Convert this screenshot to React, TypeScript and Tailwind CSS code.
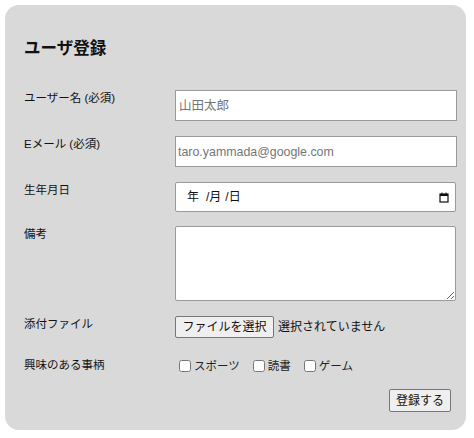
import { ReactElement } from "react"

const font = "font-['Liberation_Sans','Noto_Sans_CJK_JP',sans-serif]"

const Row = ({ label, children, className = "" }: { label: string, children: ReactElement, className?: string }) => {
    return (
        <div className={`flex ${className}`}>
            <div className="w-[151px] shrink-0 text-[11.5px] leading-[16px] text-[#111]">
                {label}
            </div>
            <div className="flex-1">
                {children}
            </div>
        </div>
    )
}

const CalendarIcon = () => (
    <svg width="10" height="11" viewBox="0 0 10 11" className="shrink-0">
        <rect x="1" y="2" width="8" height="8" fill="none" stroke="#111" strokeWidth="1.2" />
        <rect x="1" y="2" width="8" height="2" fill="#111" />
        <rect x="2.5" y="0.5" width="1" height="2" fill="#111" />
        <rect x="6.5" y="0.5" width="1" height="2" fill="#111" />
    </svg>
)

const Check = ({ label }: { label: string }) => (
    <label className="flex items-center mr-[13px]">
        <input type="checkbox" className="w-[12px] h-[12px] m-0 mr-[3px] accent-[#444]" />
        <span className="text-[11.5px] leading-[16px] text-[#222]">{label}</span>
    </label>
)

const App = () => {
    return (
        <div className={`w-[474px] h-[438px] bg-white p-[5px] ${font}`}>
            <div className="w-[461px] h-[425px] rounded-[14px] bg-[#d9d9d9] pl-[19px] pr-[9px] pt-[31px]">
                <h1 className="text-[16.5px] font-bold leading-[24px] text-[#111]">ユーザ登録</h1>

                <form className="mt-[30px] flex flex-col" onSubmit={e => e.preventDefault()}>
                    <Row label="ユーザー名 (必須)">
                        <input
                            type="text"
                            placeholder="山田太郎"
                            className="w-[282px] h-[31px] bg-white border border-[#9a9a9a] px-[3px] text-[12.5px] placeholder:text-[#767676] outline-none"
                        />
                    </Row>

                    <Row label="Eメール (必須)" className="mt-[15px]">
                        <input
                            type="email"
                            placeholder="taro.yammada@google.com"
                            className="w-[282px] h-[31px] bg-white border border-[#9a9a9a] px-[2px] text-[12.4px] placeholder:text-[#767676] outline-none"
                        />
                    </Row>

                    <Row label="生年月日" className="mt-[15px]">
                        <div className="w-[281px] h-[30px] bg-white border border-[#9a9a9a] rounded-[2px] flex items-center pl-[11px] pr-[6px] text-[12px] text-[#111]">
                            <span>年</span>
                            <span className="ml-[7px]">/月</span>
                            <span className="ml-[4px]">/日</span>
                            <div className="flex-1" />
                            <CalendarIcon />
                        </div>
                    </Row>

                    <Row label="備考" className="mt-[14px]">
                        <textarea className="block w-[281px] h-[75px] bg-white border border-[#9a9a9a] rounded-[2px] outline-none" />
                    </Row>

                    <Row label="添付ファイル" className="mt-[15px]">
                        <div className="flex items-center">
                            <button
                                type="button"
                                className="w-[99px] h-[22px] bg-[#efefef] border border-[#767676] rounded-[2px] text-[12px] text-[#111] leading-none"
                            >
                                ファイルを選択
                            </button>
                            <span className="ml-[4px] text-[12px] text-[#111]">選択されていません</span>
                        </div>
                    </Row>

                    <Row label="興味のある事柄" className="mt-[19px]">
                        <div className="flex items-center h-[16px] pl-[4px] pt-[2px]">
                            <Check label="スポーツ" />
                            <Check label="読書" />
                            <Check label="ゲーム" />
                        </div>
                    </Row>

                    <div className="flex justify-end pr-[6px] mt-[16px]">
                        <button
                            type="submit"
                            className="w-[62px] h-[23px] bg-[#efefef] border border-[#767676] rounded-[2px] text-[12px] text-[#111] leading-none"
                        >
                            登録する
                        </button>
                    </div>
                </form>
            </div>
        </div>
    )
}

export default App
